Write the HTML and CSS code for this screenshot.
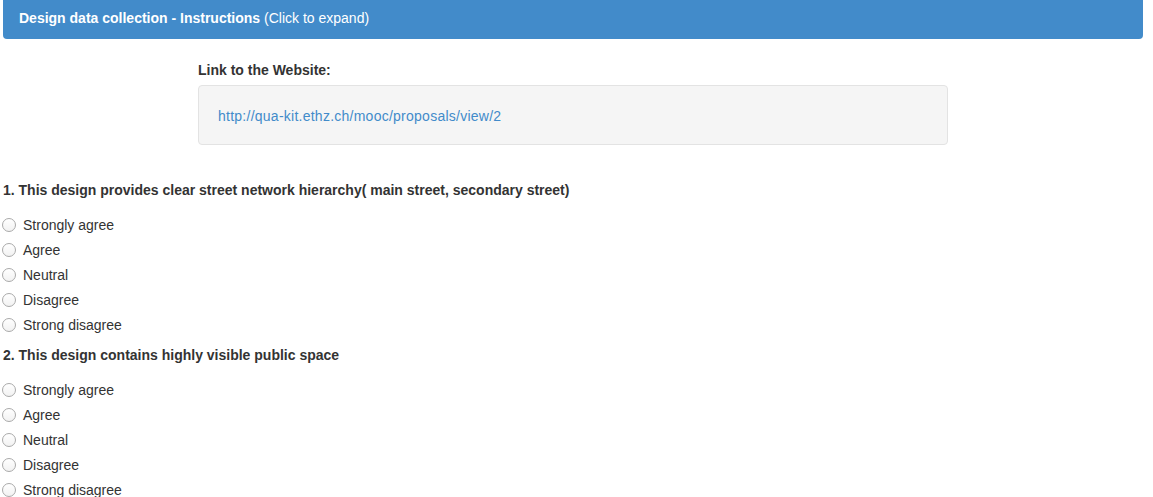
FILE: index.html
```html
<!DOCTYPE html>
<html>
<head>
<meta charset="utf-8">
<link rel="stylesheet" href="styles.css">
</head>
<body>
<div class="panel-heading"><b>Design data collection - Instructions</b> (Click to expand)</div>
<div class="link-block">
  <div class="link-label">Link to the Website:</div>
  <div class="well"><a href="#">http://qua-kit.ethz.ch/mooc/proposals/view/2</a></div>
</div>
<div class="question">
  <div class="q-title">1. This design provides clear street network hierarchy( main street, secondary street)</div>
  <label class="opt"><span class="radio"></span>Strongly agree</label>
  <label class="opt"><span class="radio"></span>Agree</label>
  <label class="opt"><span class="radio"></span>Neutral</label>
  <label class="opt"><span class="radio"></span>Disagree</label>
  <label class="opt"><span class="radio"></span>Strong disagree</label>
</div>
<div class="question">
  <div class="q-title">2. This design contains highly visible public space</div>
  <label class="opt"><span class="radio"></span>Strongly agree</label>
  <label class="opt"><span class="radio"></span>Agree</label>
  <label class="opt"><span class="radio"></span>Neutral</label>
  <label class="opt"><span class="radio"></span>Disagree</label>
  <label class="opt"><span class="radio"></span>Strong disagree</label>
</div>
</body>
</html>
```
FILE: styles.css
```css
html, body {
  margin: 0;
  padding: 0;
  background: #fff;
}
body {
  font-family: "Liberation Sans", Arial, sans-serif;
  font-size: 14px;
  color: #333;
  line-height: 20px;
}
.panel-heading {
  margin-left: 3px;
  width: 1140px;
  box-sizing: border-box;
  height: 39px;
  padding: 8px 16px 0;
  background: #428bca;
  color: #fff;
  border-radius: 0 0 4px 4px;
}
.link-block {
  margin: 21px 0 0 198px;
  width: 750px;
}
.link-label {
  font-weight: bold;
  height: 20px;
}
.well {
  margin-top: 5px;
  height: 60px;
  box-sizing: border-box;
  padding: 20px 19px;
  background: #f5f5f5;
  border: 1px solid #e3e3e3;
  border-radius: 4px;
}
.well a {
  color: #428bca;
  text-decoration: none;
  letter-spacing: 0.25px;
}
.question {
  margin-left: 2px;
}
.link-block + .question {
  margin-top: 35px;
}
.question + .question {
  margin-top: 8px;
}
.q-title {
  font-weight: bold;
  margin-left: 1px;
  margin-bottom: 12px;
}
.opt {
  display: flex;
  align-items: center;
  height: 25px;
}
.radio {
  width: 14px;
  height: 14px;
  box-sizing: border-box;
  border: 1px solid #aaaaaa;
  border-radius: 50%;
  background: linear-gradient(#ffffff, #f2f2f2);
  margin: 1px 7px 0 0;
  flex: none;
}
```
